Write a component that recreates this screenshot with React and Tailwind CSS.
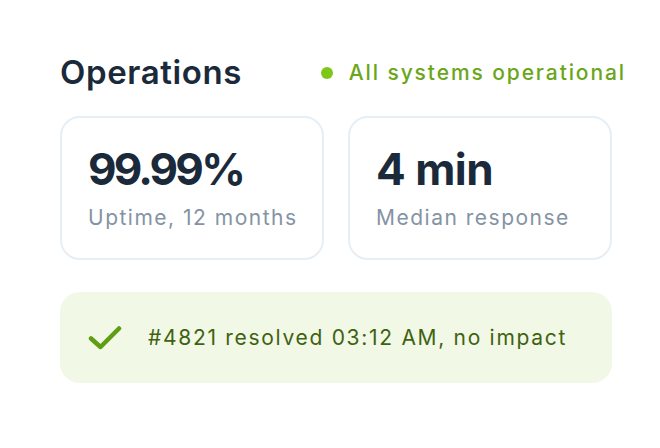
import React from 'react'

const stats = [
  { value: '99.99%', label: 'Uptime, 12 months', track: 'tracking-[-2.8px]' },
  { value: '4 min', label: 'Median response', track: 'tracking-[-0.5px]' },
]

const App = () => {
  return (
    <div className="w-[660px] h-[448px] bg-white font-['Inter',sans-serif]">
      <div className="w-[552px] ml-[60px] pt-[50px]">
        {/* Header */}
        <div className="flex items-center justify-between h-[46px]">
          <h1 className="text-[33px] font-semibold tracking-[0.6px] text-[#1b2a3a]">Operations</h1>
          <div className="flex items-center gap-[16px] mr-[-14px]">
            <span className="w-[12px] h-[12px] rounded-full bg-[#7fc61a]"></span>
            <span className="text-[21px] font-medium tracking-[1.9px] text-[#6aa61a]">All systems operational</span>
          </div>
        </div>

        {/* Stat cards */}
        <div className="grid grid-cols-2 gap-[24px] mt-[20px]">
          {stats.map((s) => (
            <div key={s.label} className="h-[144px] rounded-[20px] border-2 border-[#e6eef5] pl-[26px] pt-[23px]">
              <div className={`text-[44px] leading-[56px] font-bold text-[#1b2a3a] ${s.track}`}>{s.value}</div>
              <div className="mt-[5px] text-[21px] tracking-[1.5px] whitespace-nowrap text-[#8493a4]">{s.label}</div>
            </div>
          ))}
        </div>

        {/* Incident banner */}
        <div className="mt-[32px] h-[91px] rounded-[20px] bg-[#f1f8e6] flex items-center px-[28px] gap-[26px]">
          <svg width="34" height="26" viewBox="0 0 34 26" fill="none">
            <path d="M3 13.5 L12.5 22 L31 3.5" stroke="#5f9e14" strokeWidth="4.5" strokeLinecap="round" strokeLinejoin="round" />
          </svg>
          <span className="text-[21px] tracking-[1.7px] text-[#3f6212]">#4821 resolved 03:12 AM, no impact</span>
        </div>
      </div>
    </div>
  )
}

export default App
